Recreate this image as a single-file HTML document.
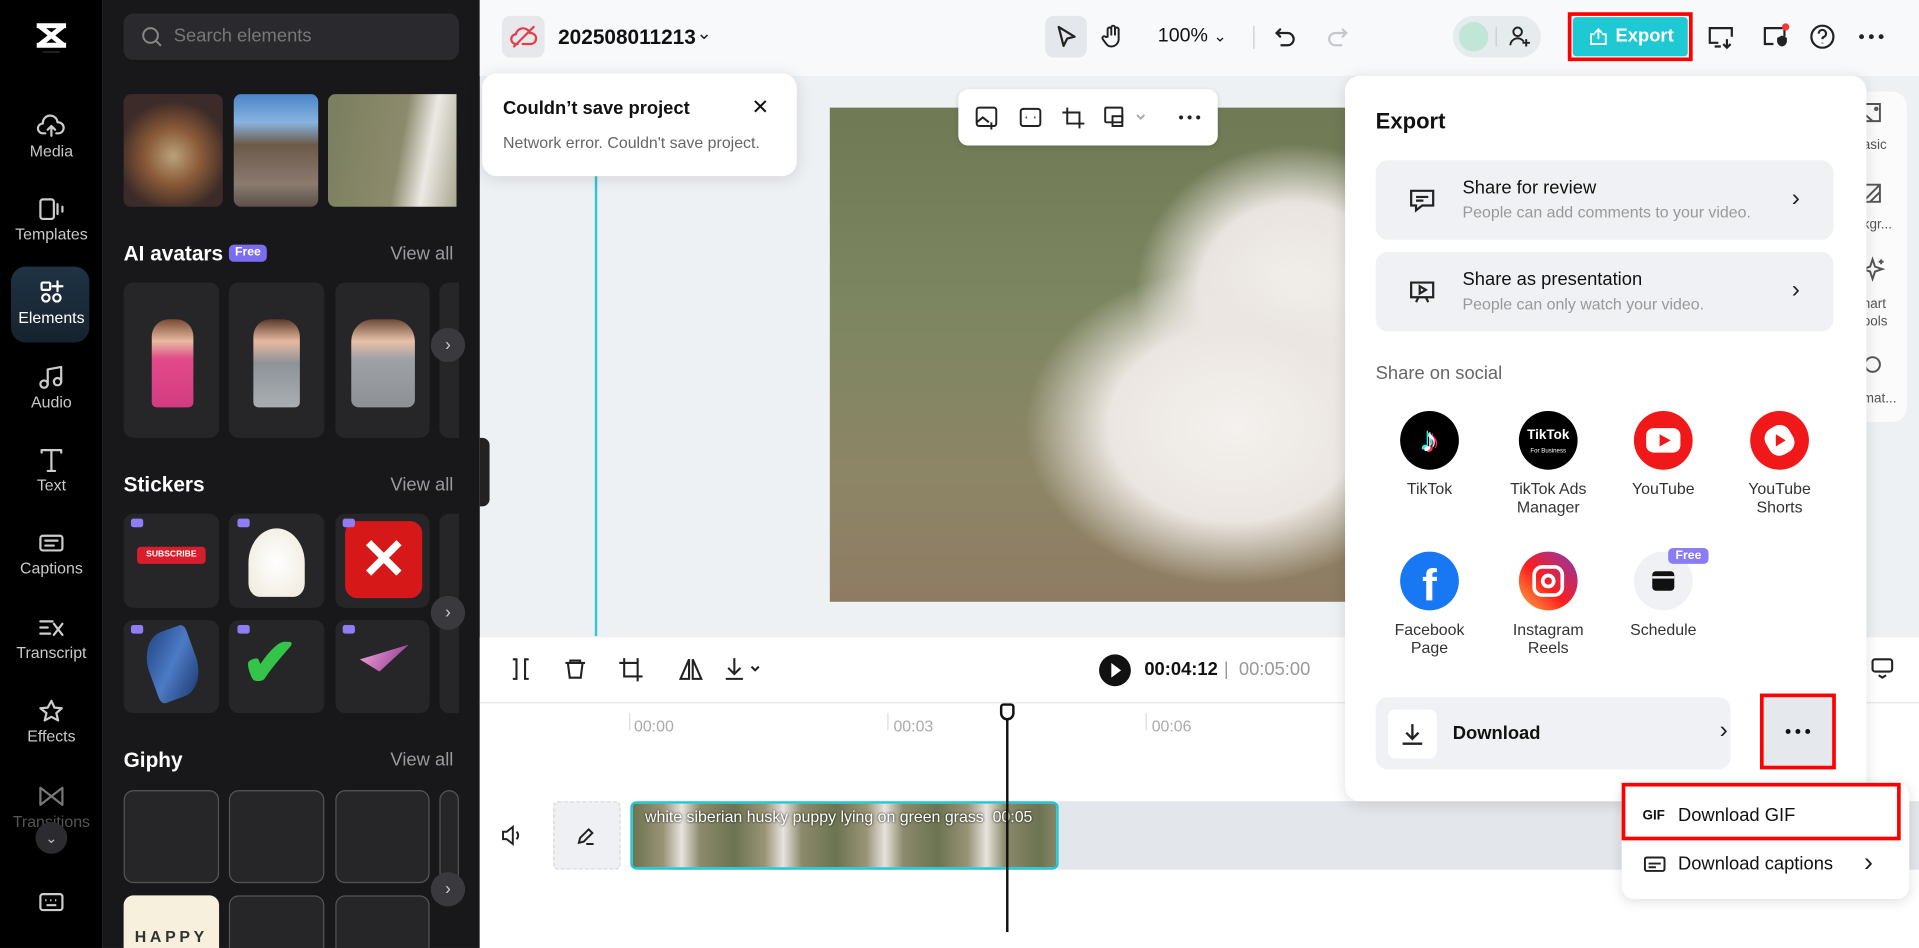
<!DOCTYPE html>
<html><head><meta charset="utf-8">
<style>
*{box-sizing:border-box;margin:0;padding:0}
html,body{width:1919px;height:948px;overflow:hidden;background:#fff;font-family:"Liberation Sans",sans-serif}
#s{position:absolute;left:0;top:0;width:1568px;height:775px;transform:scale(1.2239,1.2232);transform-origin:0 0;overflow:hidden;background:#eef1f4}
.a{position:absolute}
.rail{left:0;top:0;width:84px;height:775px;background:#000}
.ri{position:absolute;left:0;width:84px;text-align:center;color:#c9c9cc;font-size:13px}
.ri svg{display:block;margin:0 auto 2px}
.panel{left:84px;top:0;width:308px;height:775px;background:#18181a}
.h{color:#fff;font-weight:bold;font-size:17px}
.va{color:#9a9aa0;font-size:15px}
.card{position:absolute;background:#262629;border-radius:8px}
.arr{position:absolute;width:28px;height:28px;border-radius:50%;background:#3a3a3e;color:#ccc;text-align:center;line-height:27px;font-size:14px}
.ico{stroke:#222;fill:none;stroke-width:1.8;stroke-linecap:round;stroke-linejoin:round}
.exp{left:1099px;top:62px;width:426px;height:593px;background:#fff;border-radius:12px;box-shadow:0 2px 12px rgba(0,0,0,.12)}
.row{position:absolute;left:25px;width:374px;height:65px;background:#eff1f4;border-radius:10px}
.t1{position:absolute;left:71px;top:14px;font-size:15px;color:#111}
.t2{position:absolute;left:71px;top:35px;font-size:13px;color:#999}
.soc{position:absolute;width:100px;text-align:center;font-size:13px;color:#333;line-height:15px}
.soc .c{width:48px;height:48px;border-radius:50%;margin:0 auto 8px;position:relative;overflow:hidden}
</style></head><body><div id="s">

<!-- rail -->
<div class="a rail">
 <svg class="a" style="left:28px;top:18px" width="28" height="22" viewBox="0 0 28 22"><path d="M2 3h24M2 19h24M4 3l20 16M24 3L4 19" stroke="#fff" stroke-width="4" fill="none"/></svg>
 <div class="a" style="left:35px;top:42px;width:14px;height:1px;background:#333"></div>
 <div class="ri" style="top:92px"><svg width="24" height="22" viewBox="0 0 24 22" class="ico" style="stroke:#ccc"><path d="M7 17H5a4 4 0 0 1 0-8 6 6 0 0 1 12-1 4.5 4.5 0 0 1 1 9h-2M12 19v-8M9 14l3-3 3 3"/></svg>Media</div>
 <div class="ri" style="top:160px"><svg width="24" height="22" viewBox="0 0 24 22" class="ico" style="stroke:#ccc"><rect x="3" y="3" width="11" height="16" rx="2"/><path d="M17 7v8M21 9v4"/></svg>Templates</div>
 <div class="a" style="left:9px;top:218px;width:64px;height:62px;border-radius:12px;background:linear-gradient(#1e3344,#16232e)"></div>
 <div class="ri" style="top:228px;color:#fff"><svg width="24" height="22" viewBox="0 0 24 22" class="ico" style="stroke:#fff"><rect x="4" y="3" width="7" height="6" rx="1"/><path d="M17 2v8M13 6h8"/><circle cx="7.5" cy="15.5" r="3"/><circle cx="16.5" cy="15.5" r="3"/></svg>Elements</div>
 <div class="ri" style="top:297px"><svg width="24" height="22" viewBox="0 0 24 22" class="ico" style="stroke:#ccc"><circle cx="6" cy="17" r="3"/><circle cx="17" cy="15" r="3"/><path d="M9 17V5l11-2v12"/></svg>Audio</div>
 <div class="ri" style="top:365px"><svg width="24" height="22" viewBox="0 0 24 22" class="ico" style="stroke:#ccc"><path d="M4 5V3h16v2M12 3v17M9 20h6"/></svg>Text</div>
 <div class="ri" style="top:433px"><svg width="24" height="22" viewBox="0 0 24 22" class="ico" style="stroke:#ccc"><rect x="3" y="5" width="18" height="12" rx="2"/><path d="M7 9h10M7 13h7"/></svg>Captions</div>
 <div class="ri" style="top:502px"><svg width="24" height="22" viewBox="0 0 24 22" class="ico" style="stroke:#ccc"><path d="M3 6h10M3 11h6M3 16h8M14 8l7 9M21 8l-7 9"/></svg>Transcript</div>
 <div class="ri" style="top:570px"><svg width="24" height="22" viewBox="0 0 24 22" class="ico" style="stroke:#ccc"><path d="M12 3l2.5 5.5 6 .5-4.5 4 1.5 6-5.5-3-5.5 3 1.5-6L3 9l6-.5z"/></svg>Effects</div>
 <div class="ri" style="top:640px;color:#555"><svg width="24" height="22" viewBox="0 0 24 22" class="ico" style="stroke:#777"><path d="M3 4v14l9-7zM21 4v14l-9-7z"/></svg>Transitions</div>
 <div class="a" style="left:29px;top:672px;width:26px;height:26px;border-radius:50%;background:#2b2b30;color:#bbb;text-align:center;font-size:12px;line-height:26px">⌄</div>
 <svg class="a" style="left:30px;top:728px" width="24" height="20" viewBox="0 0 24 20"><rect x="3" y="3" width="18" height="13" rx="2" fill="none" stroke="#ccc" stroke-width="1.8"/><path d="M7 8h1M11 8h1M15 8h1M8 12h8" stroke="#ccc" stroke-width="1.8"/></svg>
</div>

<!-- panel -->
<div class="a panel">
 <div class="a" style="left:17px;top:11px;width:274px;height:38px;border-radius:8px;background:#2a2a2e"></div>
 <svg class="a" style="left:32px;top:22px" width="17" height="17" viewBox="0 0 17 17"><circle cx="7" cy="7" r="6" stroke="#888" stroke-width="1.6" fill="none"/><path d="M11.5 11.5l4 4" stroke="#888" stroke-width="1.6"/></svg>
 <div class="a" style="left:58px;top:21px;color:#777;font-size:15px">Search elements</div>
 <div class="a" style="left:17px;top:77px;width:81px;height:92px;border-radius:6px;background:radial-gradient(circle at 50% 55%,#b9a27a 0,#8a5a38 35%,#3c2b28 70%)"></div>
 <div class="a" style="left:107px;top:77px;width:69px;height:92px;border-radius:6px;background:linear-gradient(#4a84c8 0,#88b3e0 25%,#6d5a48 45%,#8a7b70 80%,#5b5048)"></div>
 <div class="a" style="left:184px;top:77px;width:105px;height:92px;border-radius:6px 0 0 6px;background:linear-gradient(100deg,#7a7f5e,#8c8a6c 55%,#ece9e4 75%,#a9a68f)"></div>
 <div class="a h" style="left:17px;top:198px">AI avatars</div>
 <div class="a" style="left:103px;top:200px;padding:0 5px;height:14px;border-radius:4px;background:#7c6cf0;color:#fff;font-size:10px;font-weight:bold;line-height:14px">Free</div>
 <div class="a va" style="left:235px;top:199px">View all</div>
 <div class="card" style="left:17px;top:231px;width:78px;height:127px"><div class="a" style="left:23px;top:30px;width:34px;height:72px;border-radius:14px 14px 4px 4px;background:linear-gradient(#7a4a34 0,#e8b9a0 25%,#e24a8a 45%,#d33c80)"></div></div>
 <div class="card" style="left:103px;top:231px;width:78px;height:127px"><div class="a" style="left:20px;top:30px;width:38px;height:72px;border-radius:14px 14px 4px 4px;background:linear-gradient(#5a3a2a 0,#e7b8a0 25%,#8d9399 50%,#a9aeb2)"></div></div>
 <div class="card" style="left:190px;top:231px;width:77px;height:127px"><div class="a" style="left:13px;top:30px;width:52px;height:72px;border-radius:18px 18px 6px 6px;background:linear-gradient(#6b4a36 0,#e8c0a8 25%,#9ea1a5 45%,#8d9094)"></div></div>
 <div class="card" style="left:275px;top:231px;width:16px;height:127px;border-radius:8px 0 0 8px"></div>
 <div class="arr" style="left:268px;top:268px">›</div>
 <div class="a h" style="left:17px;top:387px">Stickers</div>
 <div class="a va" style="left:235px;top:388px">View all</div>
 <div class="card" style="left:17px;top:420px;width:78px;height:77px"><div class="a" style="left:11px;top:27px;width:56px;height:14px;border-radius:3px;background:#d81d2c;color:#fff;font-size:7px;font-weight:bold;text-align:center;line-height:14px">SUBSCRIBE</div></div>
 <div class="card" style="left:103px;top:420px;width:78px;height:77px"><div class="a" style="left:16px;top:12px;width:46px;height:56px;border-radius:50% 50% 20% 20%;background:radial-gradient(#fff,#efe9dc)"></div></div>
 <div class="card" style="left:190px;top:420px;width:77px;height:77px"><div class="a" style="left:8px;top:6px;width:63px;height:63px;border-radius:10px;background:#d61818;color:#fff;font-size:46px;text-align:center;line-height:63px;font-weight:bold">✕</div></div>
 <div class="card" style="left:275px;top:420px;width:16px;height:77px;border-radius:8px 0 0 8px"></div>
 <div class="card" style="left:17px;top:507px;width:78px;height:76px"><div class="a" style="left:20px;top:8px;width:40px;height:56px;border-radius:50% 10%;background:linear-gradient(135deg,#1c3f7e,#4c7bc5,#173169);transform:rotate(-20deg)"></div></div>
 <div class="card" style="left:103px;top:507px;width:78px;height:76px"><div class="a" style="left:10px;top:2px;font-size:56px;color:#35c44a;font-weight:bold">✔</div></div>
 <div class="card" style="left:190px;top:507px;width:77px;height:76px"><div class="a" style="left:20px;top:20px;width:40px;height:22px;background:linear-gradient(120deg,#f2a8d8,#8a2f8e);clip-path:polygon(0 55%,100% 0,40% 100%)"></div></div>
 <div class="card" style="left:275px;top:507px;width:16px;height:76px;border-radius:8px 0 0 8px"></div>
 <div class="arr" style="left:268px;top:487px">›</div>
 <div class="a" style="left:23px;top:424px;width:10px;height:7px;background:#8f7df5;border-radius:2px"></div>
 <div class="a" style="left:110px;top:424px;width:10px;height:7px;background:#8f7df5;border-radius:2px"></div>
 <div class="a" style="left:196px;top:424px;width:10px;height:7px;background:#8f7df5;border-radius:2px"></div>
 <div class="a" style="left:23px;top:511px;width:10px;height:7px;background:#8f7df5;border-radius:2px"></div>
 <div class="a" style="left:110px;top:511px;width:10px;height:7px;background:#8f7df5;border-radius:2px"></div>
 <div class="a" style="left:196px;top:511px;width:10px;height:7px;background:#8f7df5;border-radius:2px"></div>
 <div class="a h" style="left:17px;top:612px">Giphy</div>
 <div class="a va" style="left:235px;top:613px">View all</div>
 <div class="card" style="left:17px;top:646px;width:78px;height:76px;border:1px solid #555"></div>
 <div class="card" style="left:103px;top:646px;width:78px;height:76px;border:1px solid #555"></div>
 <div class="card" style="left:190px;top:646px;width:77px;height:76px;border:1px solid #555"></div>
 <div class="card" style="left:275px;top:646px;width:16px;height:76px;border:1px solid #555"></div>
 <div class="card" style="left:17px;top:732px;width:78px;height:60px;background:#f6f0dc;color:#333;font-weight:bold;font-size:13px;text-align:center;padding-top:26px;letter-spacing:3px">HAPPY</div>
 <div class="card" style="left:103px;top:732px;width:78px;height:60px;border:1px solid #555"></div>
 <div class="card" style="left:190px;top:732px;width:77px;height:60px;border:1px solid #555"></div>
 <div class="arr" style="left:268px;top:713px">›</div>
</div>
<div class="a" style="left:392px;top:358px;width:8px;height:56px;background:#222;border-radius:0 6px 6px 0"></div>

<!-- top bar -->
<div class="a" style="left:392px;top:0;width:1176px;height:62px;background:#f8f9fa"></div>
<div class="a" style="left:410px;top:13px;width:35px;height:34px;border-radius:7px;background:#e6e8eb"></div>
<svg class="a" style="left:416px;top:19px" width="24" height="22" viewBox="0 0 24 22"><path d="M7 17H6a4 4 0 0 1-.5-8A6 6 0 0 1 17 8a4.5 4.5 0 0 1 1 9h-7M4 19L20 3" stroke="#e63c4a" stroke-width="1.8" fill="none" stroke-linecap="round"/></svg>
<div class="a" style="left:456px;top:21px;font-size:17px;font-weight:bold;color:#111">202508011213</div>
<div class="a" style="left:569px;top:18px;font-size:15px;color:#222">⌄</div>
<div class="a" style="left:854px;top:13px;width:34px;height:34px;border-radius:7px;background:#e4e7eb"></div>
<svg class="a" style="left:861px;top:20px" width="20" height="20" viewBox="0 0 20 20"><path d="M4 2l13 8-6 1.5-3 6z" fill="none" stroke="#222" stroke-width="1.8" stroke-linejoin="round"/></svg>
<svg class="a" style="left:898px;top:19px" width="22" height="22" viewBox="0 0 22 22"><path d="M7 11V5a1.5 1.5 0 0 1 3 0v5V3.5a1.5 1.5 0 0 1 3 0V10V5a1.5 1.5 0 0 1 3 0v8a6 6 0 0 1-6 6 5 5 0 0 1-4-2l-3-4a1.5 1.5 0 0 1 2.5-1.7z" fill="none" stroke="#222" stroke-width="1.6"/></svg>
<div class="a" style="left:946px;top:21px;font-size:16px;color:#111">100% <span style="font-size:13px">⌄</span></div>
<div class="a" style="left:1024px;top:21px;width:1px;height:19px;background:#ccc"></div>
<svg class="a" style="left:1040px;top:20px" width="20" height="20" viewBox="0 0 20 20"><path d="M6 4L3 7l3 3M3 7h9a5 5 0 0 1 0 10H7" stroke="#222" stroke-width="1.8" fill="none" stroke-linecap="round"/></svg>
<svg class="a" style="left:1083px;top:20px" width="20" height="20" viewBox="0 0 20 20"><path d="M14 4l3 3-3 3M17 7H8a5 5 0 0 0 0 10h5" stroke="#c4c7cc" stroke-width="1.8" fill="none" stroke-linecap="round"/></svg>
<div class="a" style="left:1187px;top:13px;width:72px;height:34px;border-radius:17px;background:#e6ebed"></div>
<div class="a" style="left:1192px;top:18px;width:24px;height:24px;border-radius:50%;background:#bfe6d6"></div>
<div class="a" style="left:1222px;top:22px;width:1px;height:16px;background:#ccc"></div>
<svg class="a" style="left:1232px;top:20px" width="20" height="20" viewBox="0 0 20 20"><circle cx="8" cy="6" r="3.5" stroke="#222" stroke-width="1.6" fill="none"/><path d="M2 17a6 6 0 0 1 11-3M15 12v6M12 15h6" stroke="#222" stroke-width="1.6" fill="none"/></svg>
<div class="a" style="left:1281px;top:10px;width:102px;height:40px;border:3px solid #f00"></div>
<div class="a" style="left:1285px;top:14px;width:94px;height:32px;background:#1fc9d4;border-radius:3px;color:#fff;font-size:15px;font-weight:bold;line-height:32px;padding-left:35px">Export</div>
<svg class="a" style="left:1298px;top:22px" width="16" height="16" viewBox="0 0 16 16"><path d="M5 6H2v8h12V6h-3M8 10V2M5 5l3-3 3 3" stroke="#fff" stroke-width="1.5" fill="none"/></svg>
<svg class="a" style="left:1394px;top:19px" width="24" height="22" viewBox="0 0 24 22"><path d="M10 16H3V4h18v7M7 19h5M17 13v7M14 17l3 3 3-3" stroke="#222" stroke-width="1.8" fill="none"/></svg>
<svg class="a" style="left:1439px;top:19px" width="24" height="22" viewBox="0 0 24 22"><path d="M10 17H3V4h16v7" stroke="#222" stroke-width="1.8" fill="none"/><path d="M13 12l4-2 4 2v3a5 5 0 0 1-4 4 5 5 0 0 1-4-4z" fill="#222"/><circle cx="20" cy="3" r="3" fill="#f33"/></svg>
<svg class="a" style="left:1478px;top:19px" width="22" height="22" viewBox="0 0 22 22"><circle cx="11" cy="11" r="9" stroke="#222" stroke-width="1.8" fill="none"/><path d="M8 8.5a3 3 0 1 1 4 2.8c-.7.3-1 .8-1 1.7M11 16v.5" stroke="#222" stroke-width="1.8" fill="none"/></svg>
<svg class="a" style="left:1518px;top:27px" width="22" height="6" viewBox="0 0 22 6"><circle cx="3" cy="3" r="2" fill="#222"/><circle cx="11" cy="3" r="2" fill="#222"/><circle cx="19" cy="3" r="2" fill="#222"/></svg>

<!-- canvas -->
<div class="a" style="left:486px;top:144px;width:2px;height:376px;background:#30c7d6"></div>
<div class="a" style="left:678px;top:88px;width:440px;height:404px;background:radial-gradient(ellipse 170px 130px at 330px 260px,#f4f1ee 0,#ebe6e1 60%,rgba(235,230,225,0) 100%),radial-gradient(ellipse 130px 120px at 380px 150px,#f2efeb 0,#e9e4df 60%,rgba(0,0,0,0) 100%),linear-gradient(#6f7a55 0,#7c8660 40%,#8d8566 75%,#8e7c62 100%)"></div>
<div class="a" style="left:783px;top:73px;width:212px;height:46px;background:#fff;border-radius:8px;box-shadow:0 1px 4px rgba(0,0,0,.15)"></div>
<svg class="a" style="left:796px;top:86px" width="190" height="20" viewBox="0 0 190 20"><g stroke="#222" stroke-width="1.6" fill="none"><rect x="2" y="2" width="16" height="15" rx="2"/><path d="M2 14l5-4 5 4M14 14v6M11 17h6"/><rect x="38" y="3" width="16" height="14" rx="2"/><path d="M42 10h1M49 10h1"/><path d="M76 2v13h14M72 6h14v13"/><rect x="107" y="2" width="14" height="12" rx="1"/><rect x="113" y="9" width="8" height="8"/><path d="M133 8l3 3 3-3" stroke="#aaa"/></g><circle cx="169" cy="10" r="1.7" fill="#222"/><circle cx="176" cy="10" r="1.7" fill="#222"/><circle cx="183" cy="10" r="1.7" fill="#222"/></svg>

<!-- toast -->
<div class="a" style="left:394px;top:60px;width:257px;height:84px;background:#fff;border-radius:12px;box-shadow:0 2px 14px rgba(0,0,0,.12)"></div>
<div class="a" style="left:411px;top:80px;font-size:15px;font-weight:bold;color:#111">Couldn’t save project</div>
<div class="a" style="left:614px;top:78px;font-size:17px;color:#111">✕</div>
<div class="a" style="left:411px;top:109px;font-size:13px;color:#666">Network error. Couldn't save project.</div>

<!-- right side tool panel -->
<div class="a" style="left:1500px;top:75px;width:58px;height:270px;background:#fbfbfc;border-radius:12px"></div>
<svg class="a" style="left:1518px;top:82px" width="24" height="250" viewBox="0 0 24 250"><g stroke="#555" stroke-width="1.6" fill="none"><path d="M4 3h14v14H4M4 10l8 7"/><circle cx="15" cy="7" r="1"/><path d="M4 69h14v14H4M6 81l12-12M10 83l8-8"/><path d="M10 136l2-6 2 6 6 2-6 2-2 6-2-6-6-2z M19 130v4M17 132h4"/><circle cx="12" cy="216" r="6"/></g></svg>
<div class="a" style="left:1522px;top:113px;font-size:11px;color:#555">asic</div>
<div class="a" style="left:1522px;top:178px;font-size:11px;color:#555">kgr...</div>
<div class="a" style="left:1522px;top:242px;font-size:11px;color:#555;line-height:14px">nart<br>ools</div>
<div class="a" style="left:1522px;top:320px;font-size:11px;color:#555">mat...</div>

<!-- timeline -->
<div class="a" style="left:392px;top:521px;width:1176px;height:254px;background:#fff"></div>
<div class="a" style="left:392px;top:574px;width:1176px;height:1px;background:#e8e8ea"></div>
<svg class="a" style="left:414px;top:535px" width="220" height="24" viewBox="0 0 220 24"><g stroke="#222" stroke-width="1.7" fill="none"><path d="M5 4h3v16H5M18 4h-3v16h3"/><path d="M48 7h16M52 7V5h8v2M50 7l1.5 12h9L62 7"/><path d="M96 3v15h15M92 7h15v15M107 3v4"/><path d="M142 20l7-16v16zM152 20V4l7 16z"/><path d="M186 3v13M181 11l5 5 5-5M179 20h14M200 10l3 3 3-3"/></g></svg>
<div class="a" style="left:898px;top:535px;width:26px;height:26px;border-radius:50%;background:#111"></div>
<div class="a" style="left:908px;top:542px;width:0;height:0;border-left:8px solid #fff;border-top:6px solid transparent;border-bottom:6px solid transparent"></div>
<div class="a" style="left:935px;top:539px;font-size:15px;font-weight:bold;color:#111">00:04:12</div>
<div class="a" style="left:1000px;top:539px;font-size:15px;color:#999">| &nbsp;00:05:00</div>
<svg class="a" style="left:1528px;top:536px" width="20" height="20" viewBox="0 0 20 20"><rect x="2" y="3" width="16" height="10" rx="2" stroke="#222" stroke-width="1.7" fill="none"/><path d="M7 16l3 2 3-2" stroke="#222" stroke-width="1.7" fill="none"/></svg>
<div class="a" style="left:514px;top:583px;width:1px;height:14px;background:#ddd"></div>
<div class="a" style="left:725px;top:583px;width:1px;height:14px;background:#ddd"></div>
<div class="a" style="left:936px;top:583px;width:1px;height:14px;background:#ddd"></div>
<div class="a" style="left:518px;top:586px;font-size:13px;color:#aaa">00:00</div>
<div class="a" style="left:730px;top:586px;font-size:13px;color:#aaa">00:03</div>
<div class="a" style="left:941px;top:586px;font-size:13px;color:#aaa">00:06</div>
<svg class="a" style="left:408px;top:673px" width="20" height="20" viewBox="0 0 20 20"><path d="M3 7h3l5-4v14l-5-4H3z M14 7a4 4 0 0 1 0 6" stroke="#222" stroke-width="1.6" fill="none"/></svg>
<div class="a" style="left:452px;top:655px;width:55px;height:56px;border:1px dashed #d3d6da;border-radius:4px;background:#eef0f3"></div>
<svg class="a" style="left:470px;top:675px" width="18" height="18" viewBox="0 0 18 18"><path d="M3 14l1-4 7-7 3 3-7 7zM9 15h6" stroke="#222" stroke-width="1.6" fill="none"/></svg>
<div class="a" style="left:864px;top:655px;width:704px;height:56px;background:#e3e6ea"></div>
<div class="a" style="left:515px;top:655px;width:350px;height:56px;border:2px solid #1fc7d6;border-radius:5px;background:repeating-linear-gradient(90deg,#6c7451 0,#9a9477 25px,#e7e3dd 40px,#8c8a6c 55px,#6c7451 83px)"></div>
<div class="a" style="left:527px;top:660px;font-size:13px;color:#fff;text-shadow:0 0 2px #000;white-space:nowrap">white siberian husky puppy lying on green grass &nbsp;00:05</div>
<div class="a" style="left:822px;top:576px;width:2px;height:186px;background:#111"></div>
<div class="a" style="left:817px;top:575px;width:12px;height:14px;border:2px solid #111;border-radius:3px 3px 6px 6px;background:#fff"></div>

<!-- export dropdown -->
<div class="a exp">
 <div class="a" style="left:25px;top:27px;font-size:18px;font-weight:bold;color:#111">Export</div>
 <div class="row" style="top:69px">
  <svg class="a" style="left:26px;top:22px" width="24" height="22" viewBox="0 0 24 22"><path d="M3 3h18v12h-9l-5 4v-4H3z M7 8h10M7 11h6" stroke="#222" stroke-width="1.8" fill="none"/></svg>
  <div class="t1">Share for review</div><div class="t2">People can add comments to your video.</div>
  <div class="a" style="left:340px;top:20px;font-size:20px;color:#222">›</div></div>
 <div class="row" style="top:144px">
  <svg class="a" style="left:26px;top:22px" width="24" height="22" viewBox="0 0 24 22"><path d="M3 3h18v12H3z M10 6l5 3-5 3z M7 19l2-4M17 19l-2-4" stroke="#222" stroke-width="1.8" fill="none"/></svg>
  <div class="t1">Share as presentation</div><div class="t2">People can only watch your video.</div>
  <div class="a" style="left:340px;top:20px;font-size:20px;color:#222">›</div></div>
 <div class="a" style="left:25px;top:235px;font-size:15px;color:#666">Share on social</div>
 <div class="soc" style="left:19px;top:274px"><div class="c" style="background:#000;color:#fff;font-size:28px;line-height:48px;text-shadow:-2px -1px #25f4ee,2px 1px #fe2c55">♪</div>TikTok</div>
 <div class="soc" style="left:116px;top:274px"><div class="c" style="background:#000;color:#fff;font-size:11px;font-weight:bold;line-height:11px;padding-top:15px">TikTok<br><span style="font-size:5px;font-weight:normal">For Business</span></div>TikTok Ads<br>Manager</div>
 <div class="soc" style="left:210px;top:274px"><div class="c" style="background:#f01818"><div class="a" style="left:10px;top:14px;width:28px;height:20px;border-radius:6px;background:#fff"></div><div class="a" style="left:21px;top:19px;border-left:9px solid #f01818;border-top:5px solid transparent;border-bottom:5px solid transparent"></div></div>YouTube</div>
 <div class="soc" style="left:305px;top:274px"><div class="c" style="background:#f01818"><div class="a" style="left:13px;top:12px;width:22px;height:24px;border-radius:9px;background:#fff;transform:rotate(-30deg)"></div><div class="a" style="left:21px;top:19px;border-left:8px solid #f01818;border-top:5px solid transparent;border-bottom:5px solid transparent"></div></div>YouTube<br>Shorts</div>
 <div class="soc" style="left:19px;top:389px"><div class="c" style="background:#1877f2;color:#fff;font-size:36px;font-weight:bold;line-height:56px">f</div>Facebook<br>Page</div>
 <div class="soc" style="left:116px;top:389px"><div class="c" style="background:linear-gradient(45deg,#fcb045,#fd1d1d 45%,#833ab4)"><div class="a" style="left:11px;top:11px;width:26px;height:26px;border:3px solid #fff;border-radius:8px"></div><div class="a" style="left:18px;top:18px;width:12px;height:12px;border:3px solid #fff;border-radius:50%"></div></div>Instagram<br>Reels</div>
 <div class="soc" style="left:210px;top:389px"><div class="c" style="background:#eff1f4"><div class="a" style="left:15px;top:16px;width:18px;height:16px;background:#111;border-radius:3px"></div><div class="a" style="left:15px;top:20px;width:18px;height:2px;background:#eff1f4"></div></div>Schedule</div>
 <div class="a" style="left:264px;top:386px;padding:0 6px;height:13px;border-radius:4px;background:#8a7cf5;color:#fff;font-size:10px;font-weight:bold;line-height:13px">Free</div>
 <div class="a" style="left:25px;top:508px;width:290px;height:59px;background:#eff1f4;border-radius:10px"></div>
 <div class="a" style="left:35px;top:518px;width:40px;height:40px;background:#fff;border-radius:6px"></div>
 <svg class="a" style="left:44px;top:527px" width="22" height="22" viewBox="0 0 22 22"><path d="M11 3v12M6 10l5 5 5-5M3 19h16" stroke="#222" stroke-width="1.9" fill="none"/></svg>
 <div class="a" style="left:88px;top:529px;font-size:15px;font-weight:bold;color:#111">Download</div>
 <div class="a" style="left:306px;top:524px;font-size:20px;color:#222">›</div>
 <div class="a" style="left:342px;top:508px;width:57px;height:57px;background:#e5e8ec"></div>
 <div class="a" style="left:339px;top:505px;width:62px;height:62px;border:3px solid #f00"></div>
 <svg class="a" style="left:359px;top:533px" width="22" height="6" viewBox="0 0 22 6"><circle cx="3" cy="3" r="2" fill="#111"/><circle cx="11" cy="3" r="2" fill="#111"/><circle cx="19" cy="3" r="2" fill="#111"/></svg>
</div>

<!-- submenu -->
<div class="a" style="left:1325px;top:640px;width:235px;height:95px;background:#fff;border-radius:10px;box-shadow:0 2px 10px rgba(0,0,0,.13)"></div>
<div class="a" style="left:1325px;top:640px;width:228px;height:47px;border:3px solid #f00"></div>
<div class="a" style="left:1342px;top:661px;font-size:11px;font-weight:bold;color:#111">GIF</div>
<div class="a" style="left:1371px;top:658px;font-size:15px;color:#111">Download GIF</div>
<svg class="a" style="left:1342px;top:698px" width="20" height="18" viewBox="0 0 20 18"><rect x="2" y="3" width="16" height="11" rx="1.5" stroke="#222" stroke-width="1.6" fill="none"/><path d="M5 8h10M5 11h6" stroke="#222" stroke-width="1.6"/></svg>
<div class="a" style="left:1371px;top:698px;font-size:15px;color:#111">Download captions</div>
<div class="a" style="left:1523px;top:692px;font-size:22px;color:#222">›</div>

</div></body></html>
